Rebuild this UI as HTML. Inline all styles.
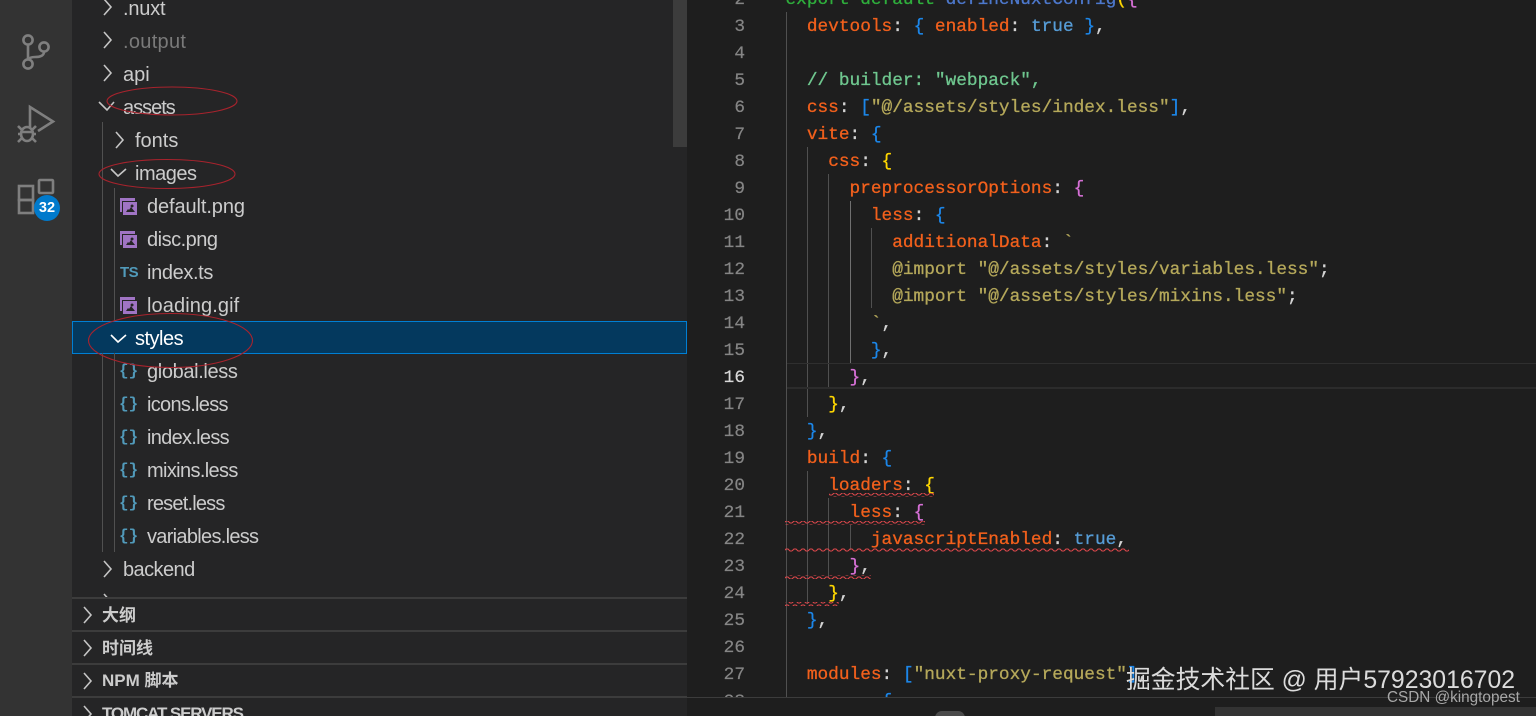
<!DOCTYPE html>
<html><head><meta charset="utf-8"><style>
html,body{margin:0;padding:0;width:1536px;height:716px;overflow:hidden;background:#1e1e1e}
#root{position:relative;width:1536px;height:716px;overflow:hidden}
.a{position:absolute}
.t{position:absolute;font:20px/33px "Liberation Sans","Noto Sans CJK SC",sans-serif;color:#cccccc;white-space:pre;height:33px}
.h{position:absolute;left:102px;font:bold 17px/33px "Liberation Sans","Noto Sans CJK SC",sans-serif;color:#cccccc;white-space:pre}
.l{position:absolute;left:785.5px;font:17.8px/27px "Liberation Mono",monospace;color:#d4d4d4;white-space:pre;height:27px;-webkit-text-stroke:.3px}
.n{position:absolute;left:700px;width:45px;text-align:right;font:17.77px/27px "Liberation Mono",monospace;color:#858585;height:27px;-webkit-text-stroke:.2px}
.o{color:#f2601c}.b{color:#1c86e8}.y{color:#ffd700}.p{color:#d670d6}.s{color:#b5a85a}.c{color:#6fc78f}.k{color:#569cd6}.w{color:#d4d4d4}
.g{position:absolute;width:1px;background:#505050}
.sl{position:absolute;height:2px;background:#3c3c3c}
.br{position:absolute;left:119px;font:bold 16px/33px "Liberation Mono",monospace;color:#519aba;white-space:pre}
</style></head><body><div id="root">
<div class="a" style="left:0;top:0;width:72px;height:716px;background:#333333"></div>
<div class="a" style="left:72px;top:0;width:615px;height:716px;background:#252526"></div>
<div class="a" style="left:673px;top:0;width:14px;height:147px;background:#3c3c3c"></div>

<!-- activity icons -->
<svg class="a" style="left:0;top:0" width="72" height="716" fill="none" stroke="#7f7f7f" stroke-width="2.6">
<circle cx="28" cy="40" r="4.6"/><circle cx="28" cy="64" r="4.6"/><circle cx="44" cy="47" r="4.6"/>
<path d="M28 45V59M44 52C44 56 39 57 35 57C31 57 29 58 28 60"/>
<path d="M30 127V107L53 121.5L38 131"/>
<ellipse cx="27" cy="134" rx="6" ry="7"/><path d="M18 126L22 130M36 126L32 130M18 134H21M33 134H36M18 142L22 138M36 142L32 138M21 132H33"/>
<rect x="19" y="186" width="14" height="14"/><rect x="19" y="200" width="14" height="13"/><rect x="39" y="180" width="14" height="13" rx="1"/>
<circle cx="36" cy="735" r="17"/><circle cx="36" cy="733" r="9"/>
</svg>
<div class="a" style="left:34px;top:195px;width:26px;height:26px;border-radius:50%;background:#007acc;color:#fff;font:bold 14.5px/27px 'Liberation Sans',sans-serif;text-align:center">32</div>

<!-- selected row -->
<div class="a" style="left:72px;top:321px;width:613px;height:31px;background:#04395e;border:1px solid #007fd4"></div>

<!-- guides -->
<div class="g" style="left:102px;top:122px;height:199px"></div>
<div class="g" style="left:102px;top:353px;height:199px"></div>
<div class="g" style="left:114px;top:188px;height:133px"></div>
<div class="g" style="left:114px;top:353px;height:199px"></div>

<!-- tree -->
<div class="t" style="left:123px;top:-7px;letter-spacing:-.2px">.nuxt</div>
<div class="t" style="left:123px;top:26px;color:#7a7a7a;letter-spacing:.3px">.output</div>
<div class="t" style="left:123px;top:59px">api</div>
<div class="t" style="left:123px;top:92px;letter-spacing:-1px">assets</div>
<div class="t" style="left:135px;top:125px">fonts</div>
<div class="t" style="left:135px;top:158px;letter-spacing:-.5px">images</div>
<div class="t" style="left:147px;top:191px;letter-spacing:-.1px">default.png</div>
<div class="t" style="left:147px;top:224px;letter-spacing:-.5px">disc.png</div>
<div class="t" style="left:147px;top:257px;letter-spacing:-.37px">index.ts</div>
<div class="t" style="left:147px;top:290px;letter-spacing:.1px">loading.gif</div>
<div class="t" style="left:135px;top:323px;color:#fff;letter-spacing:-.5px">styles</div>
<div class="t" style="left:147px;top:356px;letter-spacing:-.36px">global.less</div>
<div class="t" style="left:147px;top:389px;letter-spacing:-.7px">icons.less</div>
<div class="t" style="left:147px;top:422px;letter-spacing:-.7px">index.less</div>
<div class="t" style="left:147px;top:455px;letter-spacing:-.64px">mixins.less</div>
<div class="t" style="left:147px;top:488px;letter-spacing:-.8px">reset.less</div>
<div class="t" style="left:147px;top:521px;letter-spacing:-.7px">variables.less</div>
<div class="t" style="left:123px;top:554px;letter-spacing:-.57px">backend</div>

<div class="a" style="left:120px;top:258px;font:bold 15px/30px 'Liberation Sans',sans-serif;color:#519aba;letter-spacing:-.5px">TS</div>
<div class="br" style="top:355px">{}</div>
<div class="br" style="top:388px">{}</div>
<div class="br" style="top:421px">{}</div>
<div class="br" style="top:454px">{}</div>
<div class="br" style="top:487px">{}</div>
<div class="br" style="top:520px">{}</div>

<svg class="a" style="left:72px;top:0" width="615" height="716" fill="none" stroke="#c5c5c5" stroke-width="1.6">
<g transform="translate(-72,0)">
<path d="M104 -1L111 7L104 15M104 32L111 40L104 48M104 65L111 73L104 81"/>
<path d="M99 102L107 110L114 102"/>
<path d="M116 132L123 140L116 148"/>
<path d="M111 169L118 176L126 169"/>
<path d="M111 335L118 342L126 335" stroke="#fff"/>
<path d="M104 561L111 569L104 577"/>
<path d="M104 594L111 602"/>
<g stroke="none" fill="#a074c4">
<path d="M120 198H135V201H122V212H120Z"/><path d="M123 202H137V215H123ZM126 212H135L131 207L129 210L128 209ZM132 204.5A1.5 1.5 0 1 0 132.1 204.5Z" fill-rule="evenodd"/>
<path d="M120 231H135V234H122V245H120Z"/><path d="M123 235H137V248H123ZM126 245H135L131 240L129 243L128 242ZM132 237.5A1.5 1.5 0 1 0 132.1 237.5Z" fill-rule="evenodd"/>
<path d="M120 297H135V300H122V311H120Z"/><path d="M123 301H137V314H123ZM126 311H135L131 306L129 309L128 308ZM132 303.5A1.5 1.5 0 1 0 132.1 303.5Z" fill-rule="evenodd"/>
</g>
</g>
</svg>

<!-- section headers -->
<div class="a" style="left:72px;top:597px;width:615px;height:119px;background:#252526"></div>
<div class="sl" style="left:72px;top:597px;width:615px"></div>
<div class="sl" style="left:72px;top:630px;width:615px"></div>
<div class="sl" style="left:72px;top:663px;width:615px"></div>
<div class="sl" style="left:72px;top:696px;width:615px"></div>
<svg class="a" style="left:80px;top:600px" width="20" height="116" fill="none" stroke="#c5c5c5" stroke-width="1.6">
<path d="M4 7L11 15L4 23M4 40L11 48L4 56M4 73L11 81L4 89M4 106L11 114L4 122"/></svg>
<div class="h" style="top:599px">大纲</div>
<div class="h" style="top:632px">时间线</div>
<div class="h" style="top:664px">NPM 脚本</div>
<div class="h" style="top:697px;letter-spacing:-1.14px">TOMCAT SERVERS</div>

<!-- editor guides -->
<div class="g" style="left:786px;top:12px;height:685px"></div>
<div class="g" style="left:807px;top:147px;height:270px"></div>
<div class="g" style="left:807px;top:471px;height:133px"></div>
<div class="g" style="left:828px;top:174px;height:215px"></div>
<div class="g" style="left:828px;top:498px;height:79px"></div>
<div class="g" style="left:850px;top:201px;height:162px;background:#707070"></div>
<div class="g" style="left:850px;top:525px;height:25px"></div>
<div class="g" style="left:871px;top:228px;height:80px"></div>

<!-- current line -->
<div class="a" style="left:787px;top:363px;width:749px;height:1px;background:#2f2f2f"></div>
<div class="a" style="left:787px;top:387px;width:749px;height:2px;background:#2c2c2c"></div>

<!-- numbers -->
<div class="n" style="top:-13px">2</div><div class="n" style="top:14px">3</div><div class="n" style="top:41px">4</div><div class="n" style="top:68px">5</div><div class="n" style="top:95px">6</div><div class="n" style="top:122px">7</div><div class="n" style="top:149px">8</div><div class="n" style="top:176px">9</div><div class="n" style="top:203px">10</div><div class="n" style="top:230px">11</div><div class="n" style="top:257px">12</div><div class="n" style="top:284px">13</div><div class="n" style="top:311px">14</div><div class="n" style="top:338px">15</div><div class="n" style="top:365px;color:#d8d8d8">16</div><div class="n" style="top:392px">17</div><div class="n" style="top:419px">18</div><div class="n" style="top:446px">19</div><div class="n" style="top:473px">20</div><div class="n" style="top:500px">21</div><div class="n" style="top:527px">22</div><div class="n" style="top:554px">23</div><div class="n" style="top:581px">24</div><div class="n" style="top:608px">25</div><div class="n" style="top:635px">26</div><div class="n" style="top:662px">27</div><div class="n" style="top:689px">28</div>

<!-- code -->
<div class="l" style="top:-13px"><span style="color:#2fae3c">export default </span><span style="color:#4d78cc">defineNuxtConfig</span><span class="y">(</span><span class="p">{</span></div>
<div class="l" style="top:14px">  <span class="o">devtools</span>: <span class="b">{</span> <span class="o">enabled</span>: <span class="k">true</span> <span class="b">}</span>,</div>
<div class="l" style="top:68px">  <span class="c">// builder: "webpack",</span></div>
<div class="l" style="top:95px">  <span class="o">css</span>: <span class="b">[</span><span class="s">"@/assets/styles/index.less"</span><span class="b">]</span>,</div>
<div class="l" style="top:122px">  <span class="o">vite</span>: <span class="b">{</span></div>
<div class="l" style="top:149px">    <span class="o">css</span>: <span class="y">{</span></div>
<div class="l" style="top:176px">      <span class="o">preprocessorOptions</span>: <span class="p">{</span></div>
<div class="l" style="top:203px">        <span class="o">less</span>: <span class="b">{</span></div>
<div class="l" style="top:230px">          <span class="o">additionalData</span>: <span class="s">`</span></div>
<div class="l" style="top:257px"><span class="s">          @import "@/assets/styles/variables.less"</span>;</div>
<div class="l" style="top:284px"><span class="s">          @import "@/assets/styles/mixins.less"</span>;</div>
<div class="l" style="top:311px"><span class="s">        `</span>,</div>
<div class="l" style="top:338px">        <span class="b">}</span>,</div>
<div class="l" style="top:365px">      <span class="p">}</span>,</div>
<div class="l" style="top:392px">    <span class="y">}</span>,</div>
<div class="l" style="top:419px">  <span class="b">}</span>,</div>
<div class="l" style="top:446px">  <span class="o">build</span>: <span class="b">{</span></div>
<div class="l" style="top:473px">    <span class="o">loaders</span>: <span class="y">{</span></div>
<div class="l" style="top:500px">      <span class="o">less</span>: <span class="p">{</span></div>
<div class="l" style="top:527px">        <span class="o">javascriptEnabled</span>: <span class="k">true</span>,</div>
<div class="l" style="top:554px">      <span class="p">}</span>,</div>
<div class="l" style="top:581px">    <span class="y">}</span>,</div>
<div class="l" style="top:608px">  <span class="b">}</span>,</div>
<div class="l" style="top:662px">  <span class="o">modules</span>: <span class="b">[</span><span class="s">"nuxt-proxy-request"</span><span class="b">]</span>,</div>
<div class="l" style="top:689px">         <span class="b">{</span></div>

<!-- squiggles -->
<svg class="a" style="left:0;top:0" width="1536" height="716" fill="none">
<defs><pattern id="q" width="8" height="4" patternUnits="userSpaceOnUse"><path d="M0 3L2 1L4 1L6 3L8 3" stroke="#e0484c" stroke-width="1" fill="none"/></pattern></defs>
<rect x="829" y="493" width="105" height="4" fill="url(#q)"/>
<rect x="785" y="521" width="140" height="4" fill="url(#q)"/>
<rect x="785" y="548" width="344" height="4" fill="url(#q)"/>
<rect x="785" y="575" width="86" height="4" fill="url(#q)"/>
<rect x="785" y="602" width="54" height="4" fill="url(#q)"/>
<g stroke="#a8232d" stroke-width="1.1">
<ellipse cx="172" cy="101" rx="65" ry="14"/>
<ellipse cx="167" cy="174" rx="68" ry="14.5"/>
<ellipse cx="170.5" cy="340.5" rx="82" ry="27"/>
</g>
</svg>

<!-- bottom of editor -->
<div class="a" style="left:687px;top:697px;width:849px;height:19px;background:#1e1e1e;border-top:1px solid #3c3c3c;box-sizing:border-box"></div>
<div class="a" style="left:1215px;top:707px;width:321px;height:9px;background:#333333"></div>
<div class="a" style="left:935px;top:711px;width:30px;height:14px;border-radius:15px;background:#4a4a4a"></div>

<!-- watermarks -->
<div class="a" style="left:1126px;top:664px;font:24.8px/34px 'Liberation Sans','Noto Sans CJK SC',sans-serif;color:#dcdcdc;white-space:pre">掘金技术社区 @ 用户57923016702</div>
<div class="a" style="left:1387px;top:688px;font:15.3px/20px 'Liberation Sans',sans-serif;color:#a8a8a8;white-space:pre">CSDN @kingtopest</div>
</div></body></html>
